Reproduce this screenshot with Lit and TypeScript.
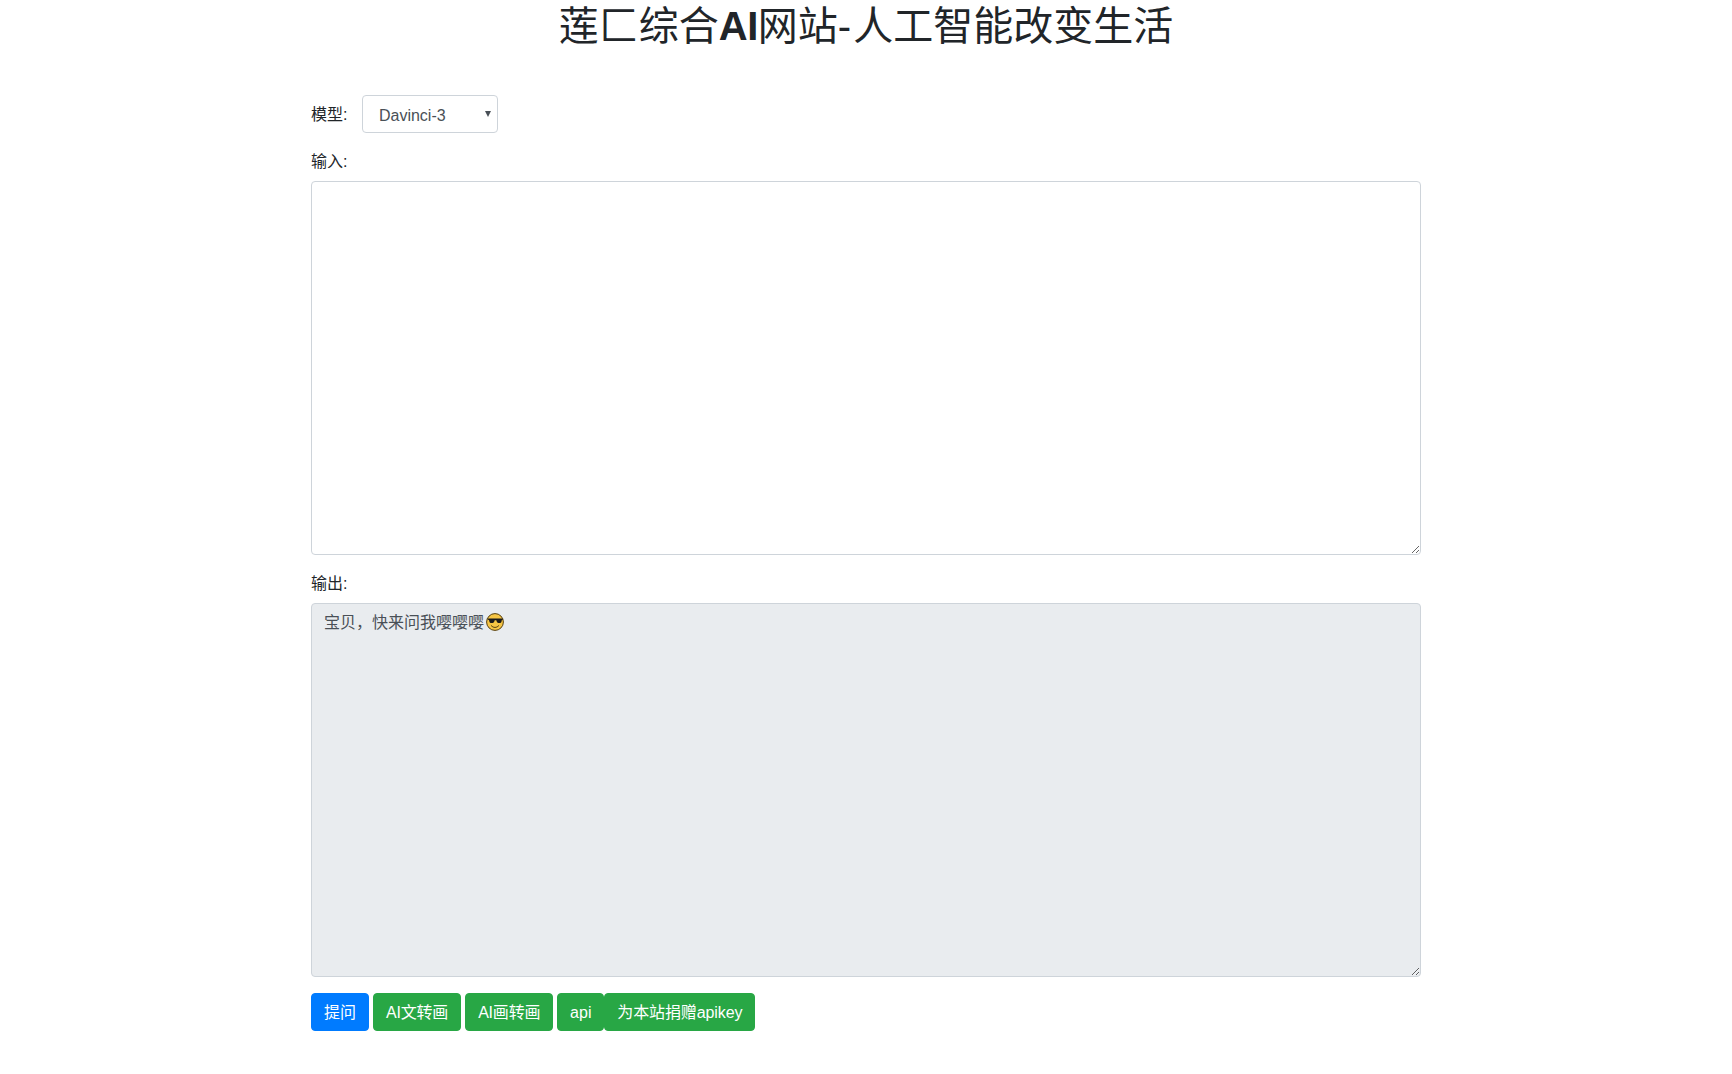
import { LitElement, html, css } from "lit";
import { customElement } from "lit/decorators.js";

@customElement("app-root")
export class AppRoot extends LitElement {
  static styles = css`
    :host {
      display: block;
      min-height: 1074px;
      background: #fff;
      color: #212529;
      font-family: "Liberation Sans", "Noto Sans CJK SC", sans-serif;
      font-size: 16px;
      line-height: 24px;
    }
    * { box-sizing: border-box; }
    .container { width: 1140px; margin: 0 auto; padding: 0 15px; }
    h1 {
      margin: 0 0 47px;
      height: 48px;
      padding-top: 2px;
      font-size: 40px;
      font-weight: 400;
      line-height: 48px;
      text-align: center;
    }
    h1 b { font-weight: 700; letter-spacing: -0.5px; }
    h1 .dash { letter-spacing: 2px; }
    .group { margin-bottom: 16px; }
    .inline { display: flex; align-items: center; }
    label { display: block; padding-top: 1px; margin-bottom: 7px; }
    .inline label { padding-top: 2px; margin: 0 14.5px 0 0; }
    select, textarea {
      font: inherit;
      color: #495057;
      border: 1px solid #ced4da;
      border-radius: 4px;
      background: #fff;
      outline: none;
    }
    .select { position: relative; width: 136px; height: 38px; }
    select {
      display: block;
      width: 100%;
      height: 100%;
      padding: 4px 12px 0 16px;
      appearance: none;
    }
    .caret {
      position: absolute;
      left: 123px;
      top: 16px;
      border-left: 3px solid transparent;
      border-right: 3px solid transparent;
      border-top: 6px solid #495057;
      pointer-events: none;
    }
    textarea {
      display: block;
      width: 100%;
      height: 374px;
      padding: 7px 12px 5px;
      resize: vertical;
    }
    textarea[readonly] { background: #e9ecef; }
    .output { position: relative; }
    .emoji { position: absolute; left: 174px; top: 9px; width: 20px; height: 20px; }
    .buttons { display: flex; }
    button {
      font: inherit;
      height: 38px;
      padding: 2px 12px 0;
      margin-right: 4px;
      color: #fff;
      border: 1px solid #28a745;
      border-radius: 4px;
      background: #28a745;
    }
    button.primary { background: #007bff; border-color: #007bff; }
    button.ai { letter-spacing: -0.2px; }
    button.tight { margin-right: 0; width: 47px; padding-left: 0; padding-right: 0; }
    button.last { letter-spacing: -0.1px; }
  `;

  render() {
    return html`
      <div class="container">
        <h1>莲匚综合<b>AI</b>网站<span class="dash">-</span>人工智能改变生活</h1>
        <div class="group inline">
          <label>模型:</label>
          <div class="select">
            <select><option>Davinci-3</option></select>
            <span class="caret"></span>
          </div>
        </div>
        <div class="group">
          <label>输入:</label>
          <textarea></textarea>
        </div>
        <div class="group">
          <label>输出:</label>
          <div class="output">
            <textarea readonly>宝贝，快来问我嘤嘤嘤</textarea>
            <svg class="emoji" viewBox="0 0 20 20" aria-hidden="true">
              <circle cx="10" cy="10" r="8.400" fill="#f6c544" stroke="#57400f" stroke-width="1" />
              <path d="M2.200 6.600h15.600v1.100l-.9.300-.5 1.900c-.2.700-.7 1-1.400 1h-1.700c-.8 0-1.300-.4-1.500-1.100l-.5-1.500h-1.600l-.5 1.500c-.2.700-.7 1.100-1.500 1.100H5.900c-.7 0-1.200-.3-1.400-1L4 8l-.9-.3z" fill="#1a1a1a" />
              <path d="M6.200 13.600c1 1.200 2.400 1.800 3.800 1.800s2.800-.6 3.800-1.800" fill="none" stroke="#57400f" stroke-width="1" stroke-linecap="round" />
            </svg>
          </div>
        </div>
        <div class="buttons">
          <button class="primary">提问</button>
          <button class="ai">AI文转画</button>
          <button class="ai">AI画转画</button>
          <button class="tight">api</button>
          <button class="last">为本站捐赠apikey</button>
        </div>
      </div>
    `;
  }
}
